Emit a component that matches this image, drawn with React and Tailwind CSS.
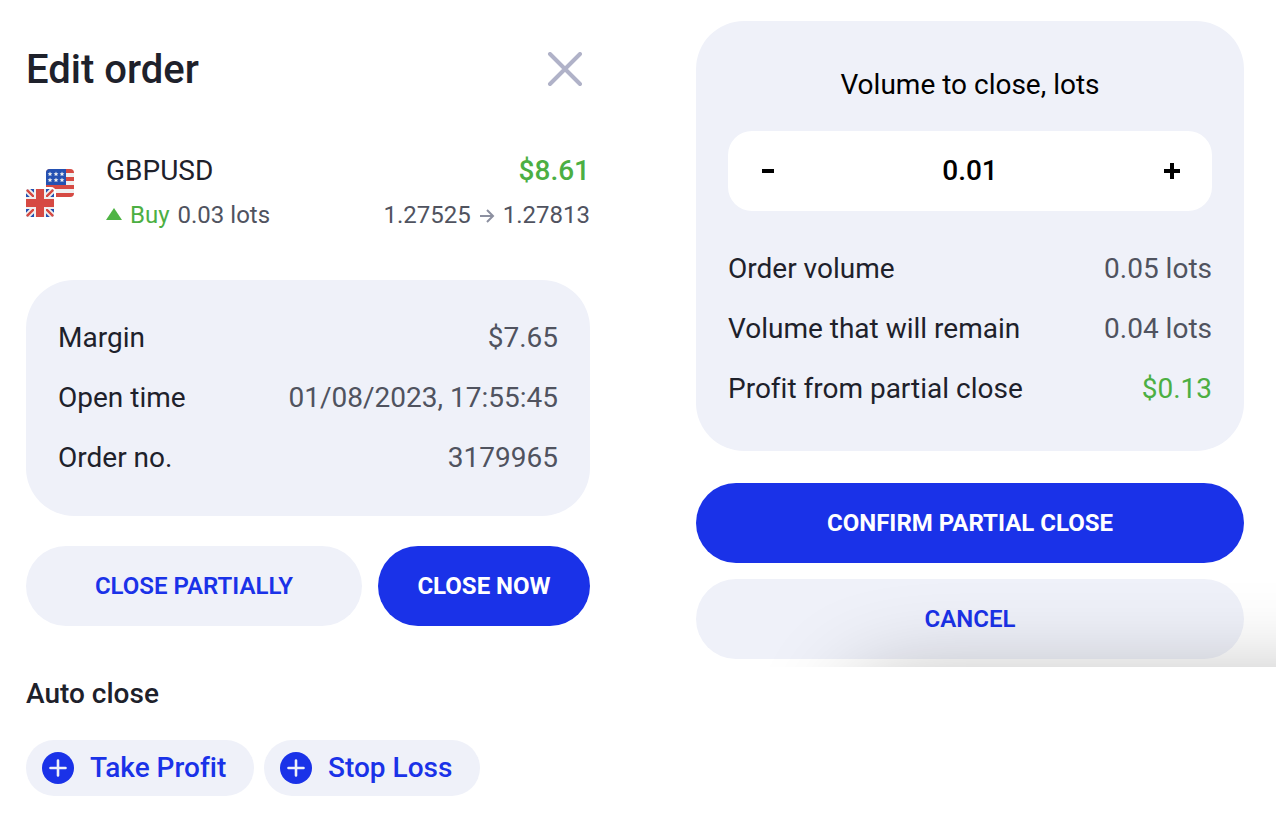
import React, { useState } from 'react';

const orderDetails = [
  { label: 'Margin', value: '$7.65' },
  { label: 'Open time', value: '01/08/2023, 17:55:45' },
  { label: 'Order no.', value: '3179965' },
];

const autoCloseOptions = [
  { label: 'Take Profit', width: 'w-[228px]' },
  { label: 'Stop Loss', width: 'w-[216px]' },
];

const ORDER_VOLUME = 0.05;
const STEP = 0.01;
const PROFIT_PER_STEP = 0.13;

const PairFlags = () => (
  <svg className="w-12 h-12 shrink-0" viewBox="0 0 48 48" role="img" aria-label="GBP / USD">
    <defs>
      <clipPath id="usd">
        <rect x="20" y="0" width="28" height="28" rx="4" />
      </clipPath>
      <clipPath id="gbp">
        <rect x="0" y="20" width="28" height="28" rx="3" />
      </clipPath>
    </defs>
    <g clipPath="url(#usd)">
      <rect x="20" width="28" height="28" fill="#f0f0f0" />
      <path d="M20 0h28v4H20zM20 8h28v4H20zM20 16h28v4H20zM20 24h28v4H20z" fill="#d64a43" />
      <rect x="20" width="20" height="16" fill="#2451b2" />
      <g fill="#f0f0f0">
        {[24, 30, 36].map((x) =>
          [5, 11].map((y) => (
            <path
              key={`${x}-${y}`}
              transform={`translate(${x} ${y})`}
              d="M0-2.4.7-.8 2.4-.7 1.1.4 1.5 2.1 0 1.2-1.5 2.1-1.1.4-2.4-.7-.7-.8z"
            />
          ))
        )}
      </g>
    </g>
    <rect x="-2" y="18" width="32" height="32" rx="5" fill="#fff" />
    <g clipPath="url(#gbp)">
      <rect y="20" width="28" height="28" fill="#2451b2" />
      <path d="M0 20l28 28M28 20L0 48" stroke="#f0f0f0" strokeWidth="6" />
      <path d="M0 20l28 28M28 20L0 48" stroke="#d64a43" strokeWidth="2.4" />
      <path d="M14 20v28M0 34h28" stroke="#f0f0f0" strokeWidth="12" />
      <path d="M14 20v28M0 34h28" stroke="#d64a43" strokeWidth="8" />
    </g>
  </svg>
);

const DetailRow = ({ label, value, valueColor = 'text-[#50535f]' }) => (
  <div className="flex items-center justify-between h-15">
    <dt className="text-[#1e212b]">{label}</dt>
    <dd className={valueColor}>{value}</dd>
  </div>
);

export default function App() {
  const [steps, setSteps] = useState(1);
  const volume = steps * STEP;

  return (
    <main className="grid grid-cols-2 items-start min-h-screen bg-white font-['Roboto',sans-serif] [font-variant-ligatures:no-common-ligatures] text-[28px] leading-10 text-[#1e212b]">
      <section className="pl-[26px] pr-12 pt-11 pb-6">
        <header className="flex items-center justify-between">
          <h1 className="text-[40px] leading-[52px] font-medium">Edit order</h1>
          <button aria-label="Close" className="flex items-center justify-center w-[50px] h-[50px] cursor-pointer">
            <svg className="w-9 h-9" viewBox="0 0 36 36" fill="none" stroke="#b0b2c8" strokeWidth="4" strokeLinecap="round">
              <path d="M3 2l30 30M33 2L3 32" />
            </svg>
          </button>
        </header>

        <div className="flex items-center gap-8 mt-[55px]">
          <PairFlags />
          <div className="flex-1 flex flex-col gap-1">
            <div className="flex items-center justify-between">
              <span>GBPUSD</span>
              <span className="font-medium text-[#4caf43]">$8.61</span>
            </div>
            <div className="flex items-center justify-between text-2xl leading-10 text-[#50535f]">
              <span className="flex items-center gap-2">
                <svg className="w-4 h-4" viewBox="0 0 16 16" fill="#4fb445">
                  <path d="M8 1l8 12H0z" />
                </svg>
                <span className="text-[#4caf43]">Buy</span>
                0.03 lots
              </span>
              <span className="flex items-center gap-2">
                1.27525
                <svg className="w-4 h-4" viewBox="0 0 16 16" fill="none" stroke="#8c90a0" strokeWidth="2">
                  <path d="M1 9h13M8 3l6 6-6 6" />
                </svg>
                1.27813
              </span>
            </div>
          </div>
        </div>

        <dl className="mt-[45px] px-8 py-7 rounded-[48px] bg-[#eff1f9]">
          {orderDetails.map((row) => (
            <DetailRow key={row.label} label={row.label} value={row.value} />
          ))}
        </dl>

        <div className="grid grid-cols-[84fr_53fr] gap-4 mt-[30px] text-2xl">
          <button className="h-20 rounded-full bg-[#eff1f9] text-[#1a32e8] font-semibold cursor-pointer">
            CLOSE PARTIALLY
          </button>
          <button className="h-20 rounded-full bg-[#1a32e8] text-white font-bold cursor-pointer">CLOSE NOW</button>
        </div>

        <h2 className="mt-12 leading-10 font-medium">Auto close</h2>
        <div className="flex gap-[10px] mt-[26px]">
          {autoCloseOptions.map((option) => (
            <button
              key={option.label}
              className={`${option.width} flex items-center gap-4 h-14 pl-4 rounded-full bg-[#eff1f9] text-[#1a32e8] font-medium whitespace-nowrap cursor-pointer`}
            >
              <svg className="w-8 h-8 shrink-0" viewBox="0 0 32 32">
                <circle cx="16" cy="16" r="16" fill="#1a32e8" />
                <path d="M16 8.5v15M8.5 16h15" stroke="#eff1f9" strokeWidth="2.6" strokeLinecap="round" />
              </svg>
              {option.label}
            </button>
          ))}
        </div>
      </section>

      <section className="relative overflow-hidden pl-[58px] pr-8 pt-[21px] pb-2">
        <div className="px-8 pt-11 pb-8 rounded-[48px] bg-[#eff1f9]">
          <h2 className="text-center text-black">Volume to close, lots</h2>
          <div className="flex items-center justify-between h-20 mt-[26px] px-6 rounded-3xl bg-white text-black">
            <button
              aria-label="Decrease volume"
              className="flex items-center justify-center w-8 h-8 cursor-pointer"
              onClick={() => setSteps(Math.max(1, steps - 1))}
            >
              <svg className="w-4 h-4" viewBox="0 0 16 16">
                <path d="M2 6h12v4H2z" />
              </svg>
            </button>
            <output className="font-medium">{volume.toFixed(2)}</output>
            <button
              aria-label="Increase volume"
              className="flex items-center justify-center w-8 h-8 cursor-pointer"
              onClick={() => setSteps(Math.min(5, steps + 1))}
            >
              <svg className="w-4 h-4" viewBox="0 0 16 16">
                <path d="M6 0h4v6h6v4h-6v6H6v-6H0V6h6z" />
              </svg>
            </button>
          </div>
          <dl className="mt-7">
            <DetailRow label="Order volume" value={`${ORDER_VOLUME.toFixed(2)} lots`} />
            <DetailRow label="Volume that will remain" value={`${(ORDER_VOLUME - volume).toFixed(2)} lots`} />
            <DetailRow
              label="Profit from partial close"
              value={`$${(PROFIT_PER_STEP * steps).toFixed(2)}`}
              valueColor="text-[#4caf43]"
            />
          </dl>
        </div>

        <div className="flex flex-col gap-4 mt-8 text-2xl">
          <button className="h-20 rounded-full bg-[#1a32e8] text-white font-bold cursor-pointer">
            CONFIRM PARTIAL CLOSE
          </button>
          <button className="h-20 rounded-full bg-[#eff1f9] text-[#1a32e8] font-semibold cursor-pointer">CANCEL</button>
        </div>

        {/* soft shadow rising from the bottom edge */}
        <div className="absolute top-full left-1/3 -right-1/3 h-40 mt-4 rounded-[40px] shadow-[0_0_96px_rgba(0,0,0,0.3)] pointer-events-none" />
      </section>
    </main>
  );
}
